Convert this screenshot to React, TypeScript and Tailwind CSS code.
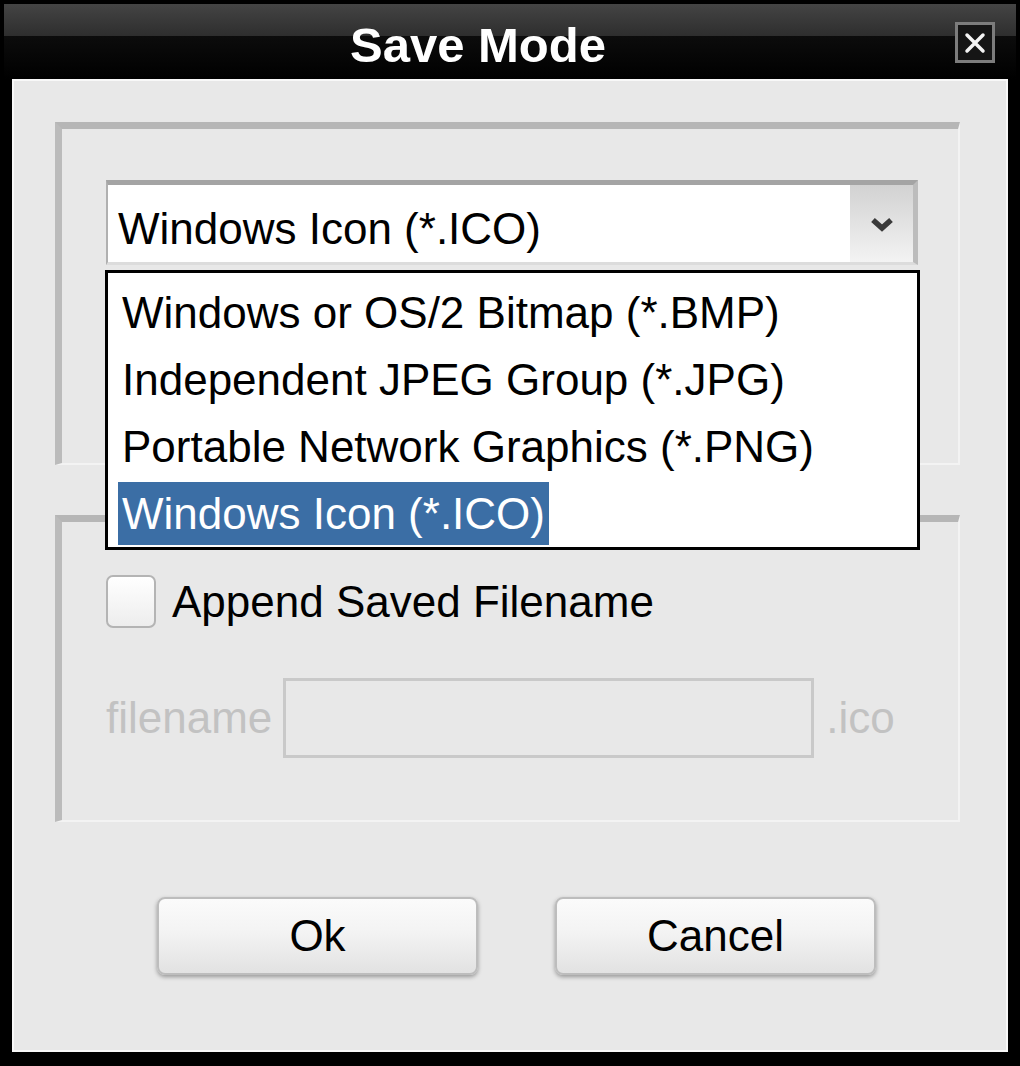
import React from 'react'

const font = "font-['Liberation_Sans',Arial,sans-serif]"

const formats = [
  'Windows or OS/2 Bitmap (*.BMP)',
  'Independent JPEG Group (*.JPG)',
  'Portable Network Graphics (*.PNG)',
  'Windows Icon (*.ICO)',
]

const CloseButton: React.FC = () => (
  <div className="absolute right-[21px] top-[18px] flex h-[41px] w-[40px] items-center justify-center border-[3px] border-[#7c7c7c] bg-[#151515]">
    <svg width="26" height="26" viewBox="0 0 26 26">
      <path d="M5 5 L21 21 M21 5 L5 21" stroke="#f4f4f4" strokeWidth="3.5" strokeLinecap="round" />
    </svg>
  </div>
)

const ComboBox: React.FC = () => (
  <div className="relative">
    <div className="flex h-[85px] w-[812px] border-t-[5px] border-r-[5px] border-b-[3px] border-l-[2px] border-t-[#a4a4a4] border-r-[#bcbcbc] border-b-[#dcdcdc] border-l-[#b0b0b0] bg-white">
      <div className="flex flex-1 items-center pl-[10px] pt-[10px] text-[44px] leading-none text-black">
        Windows Icon (*.ICO)
      </div>
      <div className="flex w-[63px] items-center justify-center bg-[linear-gradient(to_bottom,#d2d2d2,#f3f3f3)] pt-[2px]">
        <svg width="24" height="16" viewBox="0 0 24 16">
          <path d="M3 3 L12 11 L21 3" stroke="#3a3a3a" strokeWidth="5.5" fill="none" strokeLinejoin="miter" />
        </svg>
      </div>
    </div>

    {/* open list */}
    <div className="absolute left-[-1px] top-[90px] z-10 w-[815px] border-[3px] border-black bg-white pt-[6px]">
      {formats.map((f, i) => (
        <div key={f} className="flex h-[67px] items-center pl-[10px]">
          <span
            className={
              i === 3
                ? 'flex h-[63px] items-center bg-[#3b6ea5] px-[4px] text-[44px] leading-none text-white'
                : 'px-[4px] text-[44px] leading-none text-black'
            }
          >
            {f}
          </span>
        </div>
      ))}
    </div>
  </div>
)

const App: React.FC = () => {
  return (
    <div className={`${font} h-[1066px] w-[1020px] bg-black p-[4px]`}>
      {/* title bar */}
      <div className="relative flex h-[75px] items-center justify-center bg-[linear-gradient(to_bottom,#444444_0px,#2e2e2e_32px,#0c0c0c_32px,#000000_75px)] pr-[64px] pt-[8px]">
        <span className="text-[49px] font-bold leading-none text-white">Save Mode</span>
        <CloseButton />
      </div>

      <div className="px-[8px] pb-[10px]">
        <div className="h-[973px] border-2 border-[#f8f8f8] bg-[#e8e8e8] pl-[41px] pt-[41px]">
          {/* format group */}
          <div className="h-[343px] w-[905px] border-t-[7px] border-l-[7px] border-r-2 border-b-2 border-t-[#b6b6b6] border-l-[#bbbbbb] border-r-[#f3f3f3] border-b-[#f3f3f3] pl-[44px] pt-[51px]">
            <ComboBox />
          </div>

          {/* filename group */}
          <div className="mt-[50px] h-[307px] w-[905px] border-t-[7px] border-l-[7px] border-r-2 border-b-2 border-t-[#b6b6b6] border-l-[#bbbbbb] border-r-[#f3f3f3] border-b-[#f3f3f3] pl-[44px] pt-[53px]">
            <div className="flex h-[53px] items-center gap-[16px]">
              <div className="h-[53px] w-[50px] rounded-[7px] border-2 border-[#b4b4b4] bg-[linear-gradient(to_bottom,#ffffff,#ededed)]" />
              <span className="text-[44px] leading-none text-black">Append Saved Filename</span>
            </div>
            <div className="mt-[50px] flex h-[80px] items-center">
              <span className="text-[44px] leading-none text-[#c2c2c2]">filename</span>
              <div className="ml-[11px] h-[80px] w-[531px] border-[3px] border-[#c9c9c9] bg-[#e8e8e8]" />
              <span className="ml-[12px] text-[44px] leading-none text-[#c2c2c2]">.ico</span>
            </div>
          </div>

          {/* buttons */}
          <div className="mt-[75px] flex w-[905px] gap-[77px] pl-[102px]">
            {['Ok', 'Cancel'].map((label) => (
              <button
                key={label}
                type="button"
                className="flex h-[78px] w-[321px] items-center justify-center rounded-[8px] border-2 border-[#bdbdbd] bg-[linear-gradient(to_bottom,#fbfbfb,#f3f3f3_45%,#e2e2e2)] text-[44px] leading-none text-black shadow-[0_2px_4px_rgba(0,0,0,0.35)]"
              >
                {label}
              </button>
            ))}
          </div>
        </div>
      </div>
    </div>
  )
}

export default App
